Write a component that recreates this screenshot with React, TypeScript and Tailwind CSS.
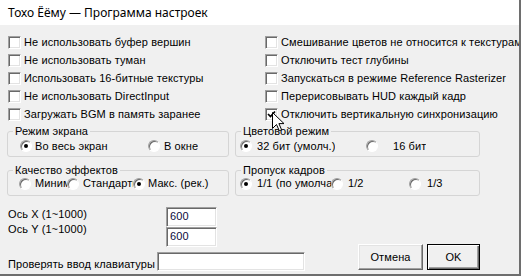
import type { ReactNode } from "react";

const SUNKEN =
  "border border-[#a0a0a0] border-r-white border-b-white bg-white shadow-[inset_1px_1px_0_#696969,inset_-1px_-1px_0_#e3e3e3]";

function CheckBox({ label, checked = false }: { label: string; checked?: boolean }) {
  return (
    <div className="flex h-[18px] items-center whitespace-nowrap">
      <span className={`flex h-[13px] w-[13px] shrink-0 items-center justify-center ${SUNKEN}`}>
        {checked && (
          <svg width="9" height="9" viewBox="0 0 9 9">
            <polyline points="1,4 3.5,6.5 8,1.5" fill="none" stroke="#000" strokeWidth="1.7" />
          </svg>
        )}
      </span>
      <span className="ml-[3px]">{label}</span>
    </div>
  );
}

function Radio({
  label,
  checked = false,
  box = "",
  text = "",
}: {
  label: string;
  checked?: boolean;
  box?: string;
  text?: string;
}) {
  return (
    <div className={`flex shrink-0 items-center whitespace-nowrap ${box}`}>
      <span className="relative h-[12px] w-[12px] shrink-0 rounded-full border border-[#a0a0a0] border-r-white border-b-white bg-white shadow-[inset_1px_1px_0_#696969]">
        {checked && <span className="absolute left-[3px] top-[3px] h-[4px] w-[4px] rounded-full bg-black" />}
      </span>
      <span className={`overflow-hidden ${text}`}>{label}</span>
    </div>
  );
}

function Group({ title, className, children }: { title: string; className: string; children: ReactNode }) {
  return (
    <fieldset className={`h-[32px] shrink-0 rounded-[3px] border border-[#d5d5d5] ${className}`}>
      <legend className="ml-[5px] px-[2px] leading-[13px]">{title}</legend>
      {children}
    </fieldset>
  );
}

function TextBox({ value = "", className }: { value?: string; className: string }) {
  return <div className={`px-[3px] leading-[16px] text-[#0a0a3c] ${SUNKEN} ${className}`}>{value}</div>;
}

const LEFT_CHECKS = [
  "Не использовать буфер вершин",
  "Не использовать туман",
  "Использовать 16-битные текстуры",
  "Не использовать DirectInput",
  "Загружать BGM в память заранее",
];

const RIGHT_CHECKS = [
  "Смешивание цветов не относится к текстурам",
  "Отключить тест глубины",
  "Запускаться в режиме Reference Rasterizer",
  "Перерисовывать HUD каждый кадр",
  "Отключить вертикальную синхронизацию",
];

export default function App() {
  return (
    <div className="relative flex h-[276px] w-[521px] flex-col overflow-hidden border-r-2 border-b-2 border-[#6e6e6e] bg-[#f0f0f0] font-['Liberation_Sans',Arial,sans-serif] text-[11px] tracking-[0.1px] text-black">
      <div className="flex h-[25px] shrink-0 items-center bg-white pl-[8px] font-['Noto_Sans',sans-serif] text-[12px] tracking-normal">
        Тохо Ёёму — Программа настроек
      </div>

      <div className="flex flex-1 flex-col pt-[8px]">
        <div className="ml-[8px] grid grid-cols-[257px_1fr]">
          <div className="flex flex-col">
            {LEFT_CHECKS.map((l) => (
              <CheckBox key={l} label={l} />
            ))}
          </div>
          <div className="flex flex-col">
            {RIGHT_CHECKS.map((l, i) => (
              <CheckBox key={l} label={l} checked={i === 4} />
            ))}
          </div>
        </div>

        <div className="ml-[7px] mt-[2px] flex gap-[6px]">
          <Group title="Режим экрана" className="w-[222px]">
            <div className="ml-[12px] flex h-[16px] items-center">
              <Radio label="Во весь экран" checked box="w-[128px]" text="ml-[3px]" />
              <Radio label="В окне" text="ml-[4px]" />
            </div>
          </Group>
          <Group title="Цветовой режим" className="w-[245px]">
            <div className="ml-[4px] flex h-[16px] items-center">
              <Radio label="32 бит (умолч.)" checked box="w-[126px]" text="ml-[5px]" />
              <Radio label="16 бит" text="ml-[15px]" />
            </div>
          </Group>
        </div>

        <div className="ml-[7px] mt-[7px] flex gap-[6px]">
          <Group title="Качество эффектов" className="w-[222px]">
            <div className="ml-[11px] flex h-[13px] items-center">
              <Radio label="Минимальное" box="w-[48px]" text="ml-[4px] w-[32px]" />
              <Radio label="Стандартное" box="w-[66px]" text="ml-[4px] w-[50px]" />
              <Radio label="Макс. (рек.)" checked text="ml-[3px]" />
            </div>
          </Group>
          <Group title="Пропуск кадров" className="w-[245px]">
            <div className="ml-[4px] flex h-[13px] items-center">
              <Radio label="1/1 (по умолчанию)" checked box="w-[91px]" text="ml-[5px] w-[74px]" />
              <Radio label="1/2" box="w-[78px]" text="ml-[5px]" />
              <Radio label="1/3" text="ml-[6px]" />
            </div>
          </Group>
        </div>

        <div className="ml-[8px] mt-[11px] flex">
          <div className="flex w-[297px] flex-col">
            <div className="flex">
              <div className="flex w-[158px] flex-col leading-[15px]">
                <span>Ось X (1~1000)</span>
                <span>Ось Y (1~1000)</span>
              </div>
              <div className="flex flex-col">
                <TextBox value="600" className="h-[20px] w-[51px]" />
                <TextBox value="600" className="h-[20px] w-[51px]" />
              </div>
            </div>
            <div className="mt-[5px] flex items-end">
              <span className="w-[149px] whitespace-nowrap leading-[13px]">Проверять ввод клавиатуры</span>
              <TextBox className="h-[19px] w-[148px]" />
            </div>
          </div>
          <div className="mb-[1px] ml-[53px] flex items-end gap-[4px]">
            <button className="h-[26px] w-[65px] border border-white border-r-[#696969] border-b-[#696969] bg-[#f0f0f0] shadow-[inset_-1px_-1px_0_#a0a0a0,inset_1px_1px_0_#e3e3e3]">
              Отмена
            </button>
            <button className="h-[26px] w-[53px] border border-black bg-[#f0f0f0] shadow-[inset_1px_1px_0_white,inset_-1px_-1px_0_#696969,inset_-2px_-2px_0_#a0a0a0]">
              OK
            </button>
          </div>
        </div>
      </div>

      <svg className="absolute left-[272px] top-[112px]" width="13" height="20" viewBox="0 0 13 20">
        <path d="M0.5 0.5 L0.5 16.5 L4.5 12.5 L7.3 18.8 L9.6 17.8 L6.9 11.6 L12 11.6 Z" fill="#fff" stroke="#000" strokeWidth="1" />
      </svg>
    </div>
  );
}
